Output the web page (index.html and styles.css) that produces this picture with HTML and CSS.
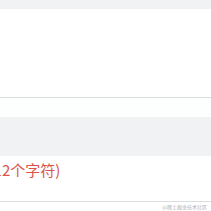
FILE: index.html
```html
<!DOCTYPE html>
<html>
<head>
<meta charset="utf-8">
<link rel="stylesheet" href="styles.css">
</head>
<body>
<div class="page">
  <div class="band top"></div>
  <div class="cell first"></div>
  <div class="spacer"></div>
  <div class="band mid"></div>
  <div class="cell second">
    <div class="note">(最多12个字符)</div>
  </div>
  <div class="foot"><span class="mark">@稀土掘金技术社区</span></div>
</div>
</body>
</html>
```

FILE: styles.css
```css
html, body { margin: 0; padding: 0; background: #fff; }
.page { width: 211px; height: 211px; overflow: hidden; font-family: "Noto Sans CJK SC", "Noto Sans", sans-serif; }
.band { background: #f1f2f4; }
.top { height: 9px; }
.first { height: 88px; border-bottom: 1px solid #dcdcdc; }
.spacer { height: 19px; background: #fdfefe; }
.mid { height: 39px; }
.second { height: 45px; border-bottom: 1px solid #dcdcdc; overflow: hidden; }
.note { margin-left: -41.5px; margin-top: 2px; font-size: 15px; line-height: 24px; color: #dc5449; white-space: nowrap; }
.foot { display: flex; justify-content: flex-end; padding-right: 4px; }
.mark { font-size: 5px; color: #b0b0b0; line-height: 8px; margin-top: 1px; }
```
